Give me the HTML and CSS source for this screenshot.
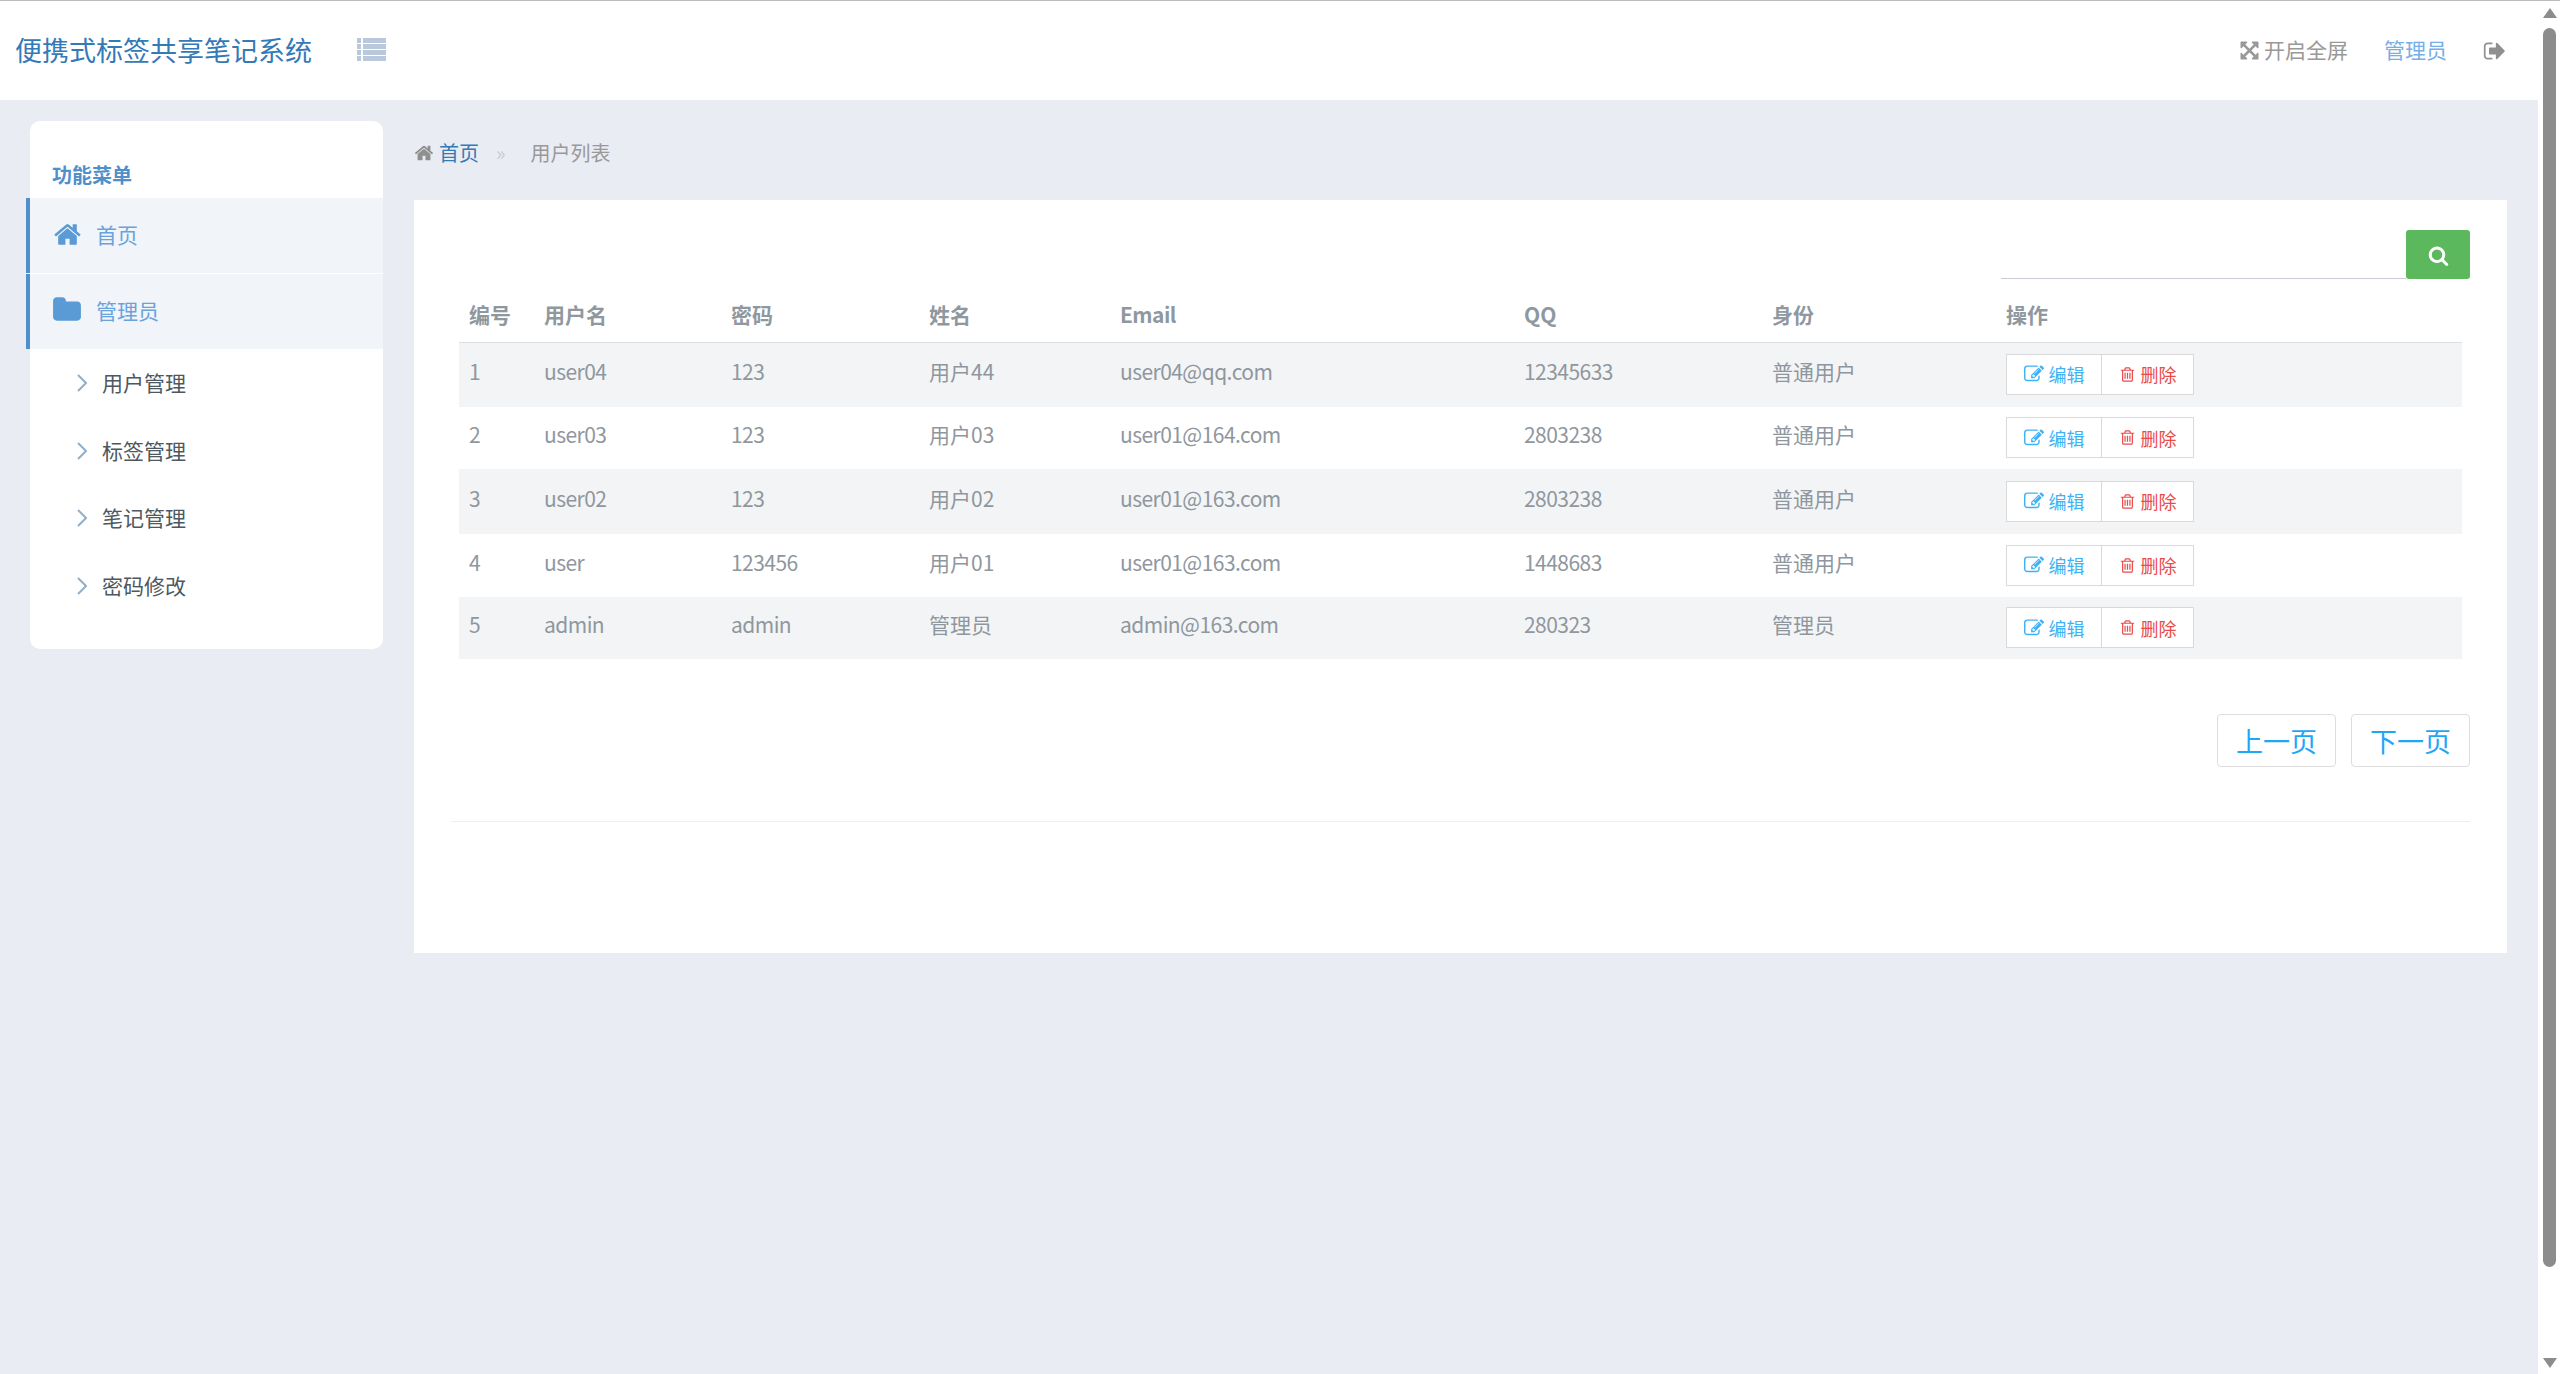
FILE: index.html
```html
<!DOCTYPE html>
<html lang="zh-CN">
<head>
<meta charset="utf-8">
<title>便携式标签共享笔记系统</title>
<link rel="stylesheet" href="styles.css">
</head>
<body>
<svg class="defs" aria-hidden="true">
  <symbol id="i-home" viewBox="0 0 1792 1792"><path d="M1472 992v480q0 26-19 45t-45 19h-384v-384h-256v384h-384q-26 0-45-19t-19-45v-480q0-1 .5-3t.5-3l575-474 575 474q1 2 1 6zm223-69l-62 74q-8 9-21 11h-3q-13 0-21-7l-692-577-692 577q-12 8-24 7-13-2-21-11l-62-74q-8-10-7-23.5t11-21.5l719-599q32-26 76-26t76 26l244 204v-195q0-14 9-23t23-9h192q14 0 23 9t9 23v408l219 182q10 8 11 21.5t-7 23.5z"/></symbol>
  <symbol id="i-folder" viewBox="0 0 1792 1792"><path d="M1728 608v704q0 92-66 158t-158 66h-1216q-92 0-158-66t-66-158v-960q0-92 66-158t158-66h320q92 0 158 66t66 158v32h672q92 0 158 66t66 158z"/></symbol>
  <symbol id="i-search" viewBox="0 0 1792 1792"><path d="M1216 832q0-185-131.500-316.500t-316.500-131.500-316.500 131.500-131.500 316.500 131.500 316.500 316.500 131.500 316.500-131.500 131.500-316.500zm512 832q0 52-38 90t-90 38q-54 0-90-38l-343-342q-179 124-399 124-143 0-273.500-55.500t-225-150-150-225-55.500-273.500 55.500-273.500 150-225 225-150 273.500-55.500 273.500 55.500 225 150 150 225 55.500 273.500q0 220-124 399l343 343q37 37 37 90z"/></symbol>
  <symbol id="i-edit" viewBox="0 0 1792 1792"><path d="M888 1184l116-116-152-152-116 116v56h96v96h56zm440-720q-16-16-33 1l-350 350q-17 17-1 33t33-1l350-350q17-17 1-33zm80 594v190q0 119-84.500 203.500t-203.500 84.500h-832q-119 0-203.500-84.500t-84.500-203.500v-832q0-119 84.500-203.500t203.500-84.500h832q63 0 117 25 15 7 18 23 3 17-9 29l-49 49q-14 14-32 8-23-6-45-6h-832q-66 0-113 47t-47 113v832q0 66 47 113t113 47h832q66 0 113-47t47-113v-126q0-13 9-22l64-64q15-15 35-7t20 29zm-96-738l288 288-672 672h-288v-288zm444 132l-92 92-288-288 92-92q28-28 68-28t68 28l152 152q28 28 28 68t-28 68z"/></symbol>
  <symbol id="i-trash" viewBox="0 0 1792 1792"><path d="M704 736v576q0 14-9 23t-23 9h-64q-14 0-23-9t-9-23v-576q0-14 9-23t23-9h64q14 0 23 9t9 23zm256 0v576q0 14-9 23t-23 9h-64q-14 0-23-9t-9-23v-576q0-14 9-23t23-9h64q14 0 23 9t9 23zm256 0v576q0 14-9 23t-23 9h-64q-14 0-23-9t-9-23v-576q0-14 9-23t23-9h64q14 0 23 9t9 23zm128 724v-948h-896v948q0 22 7 40.500t14.500 27 10.500 8.500h832q3 0 10.500-8.500t14.500-27 7-40.500zm-672-1076h448l-48-117q-7-9-17-11h-317q-10 2-17 11zm928 32v64q0 14-9 23t-23 9h-96v948q0 83-47 143.500t-113 60.500h-832q-66 0-113-58.500t-47-141.500v-952h-96q-14 0-23-9t-9-23v-64q0-14 9-23t23-9h309l70-167q15-37 54-63t79-26h320q40 0 79 26t54 63l70 167h309q14 0 23 9t9 23z"/></symbol>
  <symbol id="i-signout" viewBox="0 0 1792 1792"><path d="M704 1440q0 4 1 20t.5 26.500-3 23.500-10 19.500-20.500 6.500h-320q-119 0-203.500-84.500t-84.500-203.500v-704q0-119 84.500-203.500t203.500-84.500h320q13 0 22.500 9.500t9.500 22.500q0 4 1 20t.5 26.500-3 23.500-10 19.500-20.500 6.500h-320q-66 0-113 47t-47 113v704q0 66 47 113t113 47h312l11.500 1 11.500 3 8 5.500 7 9 2 13.500zm928-544q0 26-19 45l-544 544q-19 19-45 19t-45-19-19-45v-288h-448q-26 0-45-19t-19-45v-384q0-26 19-45t45-19h448v-288q0-26 19-45t45-19 45 19l544 544q19 19 19 45z"/></symbol>
  <symbol id="i-full" viewBox="0 0 1792 1792"><path d="M1411 541l-355 355 355 355 144-144q29-31 70-14 39 17 39 59v448q0 26-19 45t-45 19h-448q-42 0-59-40-17-39 14-69l144-144-355-355-355 355 144 144q31 30 14 69-17 40-59 40h-448q-26 0-45-19t-19-45v-448q0-42 40-59 39-17 69 14l144 144 355-355-355-355-144 144q-19 19-45 19-12 0-24-5-40-17-40-59v-448q0-26 19-45t45-19h448q42 0 59 40 17 39-14 69l-144 144 355 355 355-355-144-144q-31-30-14-69 17-40 59-40h448q26 0 45 19t19 45v448q0 42-39 59-13 5-25 5-26 0-45-19z"/></symbol>
  <symbol id="i-list" viewBox="0 0 29 23"><path d="M0 0h4v5H0zM6 0h23v5H6zM0 6h4v5H0zM6 6h23v5H6zM0 12h4v5H0zM6 12h23v5H6zM0 18h4v5H0zM6 18h23v5H6z"/></symbol>
  <symbol id="i-chev" viewBox="0 0 10 18"><path d="M1 1l8 8-8 8" fill="none" stroke="currentColor" stroke-width="2"/></symbol>
</svg>

<div class="page">
  <header class="topbar">
    <h1 class="brand">便携式标签共享笔记系统</h1>
    <svg class="ico-list"><use href="#i-list"/></svg>
    <div class="top-right">
      <span class="top-full"><svg class="ico-full"><use href="#i-full"/></svg>开启全屏</span>
      <a class="top-user">管理员</a>
      <svg class="ico-signout"><use href="#i-signout"/></svg>
    </div>
  </header>

  <div class="body-row">
    <aside class="sidebar">
      <div class="side-title">功能菜单</div>
      <a class="side-active"><svg class="ico-home"><use href="#i-home"/></svg>首页</a>
      <a class="side-active second"><svg class="ico-folder"><use href="#i-folder"/></svg>管理员</a>
      <ul class="side-sub">
        <li><svg class="ico-chev"><use href="#i-chev"/></svg>用户管理</li>
        <li><svg class="ico-chev"><use href="#i-chev"/></svg>标签管理</li>
        <li><svg class="ico-chev"><use href="#i-chev"/></svg>笔记管理</li>
        <li><svg class="ico-chev"><use href="#i-chev"/></svg>密码修改</li>
      </ul>
    </aside>

    <main class="content">
      <nav class="crumbs">
        <svg class="ico-crumb"><use href="#i-home"/></svg>
        <a class="crumb-link">首页</a>
        <span class="crumb-sep">»</span>
        <span>用户列表</span>
      </nav>

      <section class="panel">
        <div class="search">
          <div class="search-input"></div>
          <button class="search-btn"><svg class="ico-search"><use href="#i-search"/></svg></button>
        </div>

        <table class="grid">
          <colgroup>
            <col class="c1"><col class="c2"><col class="c3"><col class="c4"><col class="c5"><col class="c6"><col class="c7"><col class="c8">
          </colgroup>
          <thead>
            <tr><th>编号</th><th>用户名</th><th>密码</th><th>姓名</th><th>Email</th><th>QQ</th><th>身份</th><th>操作</th></tr>
          </thead>
          <tbody>
            <tr><td>1</td><td>user04</td><td>123</td><td>用户44</td><td>user04@qq.com</td><td>12345633</td><td>普通用户</td><td><div class="ops"><a class="op op-edit"><svg class="ico-edit"><use href="#i-edit"/></svg>编辑</a><a class="op op-del"><svg class="ico-trash"><use href="#i-trash"/></svg>删除</a></div></td></tr>
            <tr><td>2</td><td>user03</td><td>123</td><td>用户03</td><td>user01@164.com</td><td>2803238</td><td>普通用户</td><td><div class="ops"><a class="op op-edit"><svg class="ico-edit"><use href="#i-edit"/></svg>编辑</a><a class="op op-del"><svg class="ico-trash"><use href="#i-trash"/></svg>删除</a></div></td></tr>
            <tr><td>3</td><td>user02</td><td>123</td><td>用户02</td><td>user01@163.com</td><td>2803238</td><td>普通用户</td><td><div class="ops"><a class="op op-edit"><svg class="ico-edit"><use href="#i-edit"/></svg>编辑</a><a class="op op-del"><svg class="ico-trash"><use href="#i-trash"/></svg>删除</a></div></td></tr>
            <tr><td>4</td><td>user</td><td>123456</td><td>用户01</td><td>user01@163.com</td><td>1448683</td><td>普通用户</td><td><div class="ops"><a class="op op-edit"><svg class="ico-edit"><use href="#i-edit"/></svg>编辑</a><a class="op op-del"><svg class="ico-trash"><use href="#i-trash"/></svg>删除</a></div></td></tr>
            <tr><td>5</td><td>admin</td><td>admin</td><td>管理员</td><td>admin@163.com</td><td>280323</td><td>管理员</td><td><div class="ops"><a class="op op-edit"><svg class="ico-edit"><use href="#i-edit"/></svg>编辑</a><a class="op op-del"><svg class="ico-trash"><use href="#i-trash"/></svg>删除</a></div></td></tr>
          </tbody>
        </table>

        <div class="pager">
          <a class="page-btn">上一页</a>
          <a class="page-btn">下一页</a>
        </div>
        <hr class="rule">
      </section>
    </main>
  </div>
</div>

<div class="scrollbar">
  <span class="arrow-up"></span>
  <span class="thumb"></span>
  <span class="arrow-down"></span>
</div>
</body>
</html>
```

FILE: styles.css
```css
* { box-sizing: border-box; }

html, body { margin: 0; height: 100%; }

body {
  display: flex;
  height: 1374px;
  overflow: hidden;
  border-top: 1px solid #bcbcbc;
  background: #fff;
  font-family: "Noto Sans CJK SC", "Noto Sans", sans-serif;
  font-size: 21px;
  color: #8f979e;
}

.defs { display: none; }

svg { fill: currentColor; flex: none; }

/* page */
.page {
  width: 2538px;
  height: 1373px;
  background: #e9ecf3;
  display: flex;
  flex-direction: column;
}

/* top bar */
.topbar {
  height: 99px;
  background: #fff;
  display: flex;
  align-items: center;
  padding: 0 31px 0 15px;
}

.brand {
  margin: 0 45px 2px 0;
  font-size: 27px;
  font-weight: 400;
  color: #337ab7;
  line-height: 1;
  white-space: nowrap;
}

.ico-list { width: 29px; height: 23px; color: #b9c8db; margin-bottom: 2px; }

.top-right {
  margin-left: auto;
  display: flex;
  align-items: center;
  color: #999;
}

.top-full { display: flex; align-items: center; gap: 4px; padding-bottom: 3px; }

.ico-full { width: 21px; height: 21px; margin: 3px 0 0 -1px; }

.top-user { margin: 0 36px; padding-bottom: 3px; color: #77aee6; }

.ico-signout { width: 24px; height: 24px; color: #8f8f8f; }

/* layout row */
.body-row { display: flex; flex: 1; align-items: flex-start; }

/* sidebar */
.sidebar {
  width: 353px;
  margin: 21px 0 0 30px;
  padding-bottom: 30px;
  background: #fff;
  border-radius: 10px;
}

.side-title {
  height: 77px;
  padding: 38px 0 0 22px;
  font-size: 20px;
  line-height: 32px;
  font-weight: 700;
  color: #4f8fcb;
}

.side-active {
  height: 75px;
  margin-left: -4px;
  padding: 0 0 3px 23px;
  display: flex;
  align-items: center;
  background: #f1f5fa;
  border-left: 4px solid #4f8fcb;
  color: #6aa3d9;
}

.side-active.second { margin-top: 1px; }

.ico-home { width: 29px; height: 29px; color: #5b9bd5; margin-right: 14px; }

.ico-folder { width: 30px; height: 30px; color: #5b9bd5; margin: 0 14px 0 -1px; }

.side-sub { list-style: none; margin: 0; padding: 0; }

.side-sub li {
  height: 67.500px;
  padding: 0 0 1px 47px;
  display: flex;
  align-items: center;
  color: #4d5860;
}

.ico-chev { width: 10px; height: 18px; color: #8fb0cc; margin: 2px 15px 0 0; }

/* content */
.content { flex: 1; margin: 0 31px; min-width: 0; }

.crumbs {
  height: 100px;
  padding-top: 5px;
  display: flex;
  align-items: center;
  font-size: 20px;
  color: #999;
}

.ico-crumb { width: 20px; height: 20px; margin-right: 5px; color: #8f8f8f; }

.crumb-link { color: #337ab7; }

.crumb-sep { margin: 0 25px 0 17px; color: #ccc; }

.panel {
  height: 753px;
  padding: 30px 37px 0;
  background: #fff;
}

/* search */
.search { display: flex; justify-content: flex-end; align-items: flex-end; }

.search-input { width: 405px; height: 49px; border-bottom: 1px solid #c8ccd2; }

.search-btn {
  width: 64px;
  height: 49px;
  padding: 0;
  border: 0;
  border-radius: 3px;
  background: #5cb85c;
  color: #fff;
  display: flex;
  align-items: center;
  justify-content: center;
}

.ico-search { width: 21px; height: 21px; margin-top: 2px; }

/* table */
.grid {
  width: 2003px;
  margin: 0 8px;
  table-layout: fixed;
  border-collapse: collapse;
}

.c1 { width: 74px; }
.c2 { width: 187px; }
.c3 { width: 198px; }
.c4 { width: 191px; }
.c5 { width: 404px; }
.c6 { width: 248px; }
.c7 { width: 234px; }
.c8 { width: 467px; }

.grid th {
  height: 63px;
  padding: 7px 0 0 11px;
  text-align: left;
  font-weight: 700;
  border-bottom: 1px solid #dcdee1;
  color: #8f989f;
}

.grid td { padding: 0 0 8px 11px; }

.grid th:first-child, .grid td:first-child { padding-left: 10px; }

/* latin-only columns run slightly tighter than the CJK ones */
.grid td:nth-child(2), .grid td:nth-child(3),
.grid td:nth-child(5), .grid td:nth-child(6),
.grid th:nth-child(5) { letter-spacing: -0.55px; }

.grid tbody tr:nth-child(odd) { background: #f3f4f6; }
.grid tbody tr:nth-child(1) { height: 65px; }
.grid tbody tr:nth-child(2) { height: 62px; }
.grid tbody tr:nth-child(3) { height: 65px; }
.grid tbody tr:nth-child(4) { height: 63px; }
.grid tbody tr:nth-child(5) { height: 62px; }

/* row actions */
.grid td:last-child { padding-bottom: 1px; }

.ops {
  display: flex;
  width: 188px;
  height: 41px;
  background: #fff;
  border: 1px solid #d9d9d9;
  font-size: 18px;
}

.op {
  display: flex;
  align-items: center;
  justify-content: center;
  gap: 5px;
}

.op-edit { width: 95px; border-right: 1px solid #d9d9d9; color: #3fb1f5; }
.op-del { flex: 1; color: #ea4a4a; }

.ico-edit { width: 20px; height: 20px; }
.ico-trash { width: 17px; height: 17px; }

/* pager */
.pager { display: flex; justify-content: flex-end; gap: 15px; margin-top: 55px; }

.page-btn {
  width: 119px;
  height: 53px;
  display: flex;
  align-items: center;
  justify-content: center;
  border: 1px solid #ddd;
  border-radius: 4px;
  font-size: 27px;
  color: #1ea7f5;
}

.rule { margin: 54px 0 0; border: 0; border-top: 1px solid #eee; }

/* fake window scrollbar */
.scrollbar {
  width: 22px;
  height: 1373px;
  background: #fff;
  position: relative;
}

.thumb {
  position: absolute;
  left: 5px;
  top: 27px;
  width: 13px;
  height: 1239px;
  border-radius: 7px;
  background: #8c8c8c;
}

.arrow-up, .arrow-down {
  position: absolute;
  left: 5px;
  width: 0;
  height: 0;
  border-left: 7px solid transparent;
  border-right: 7px solid transparent;
}

.arrow-up { top: 7px; border-bottom: 10px solid #8c8c8c; }
.arrow-down { top: 1357px; border-top: 10px solid #8c8c8c; }
```
